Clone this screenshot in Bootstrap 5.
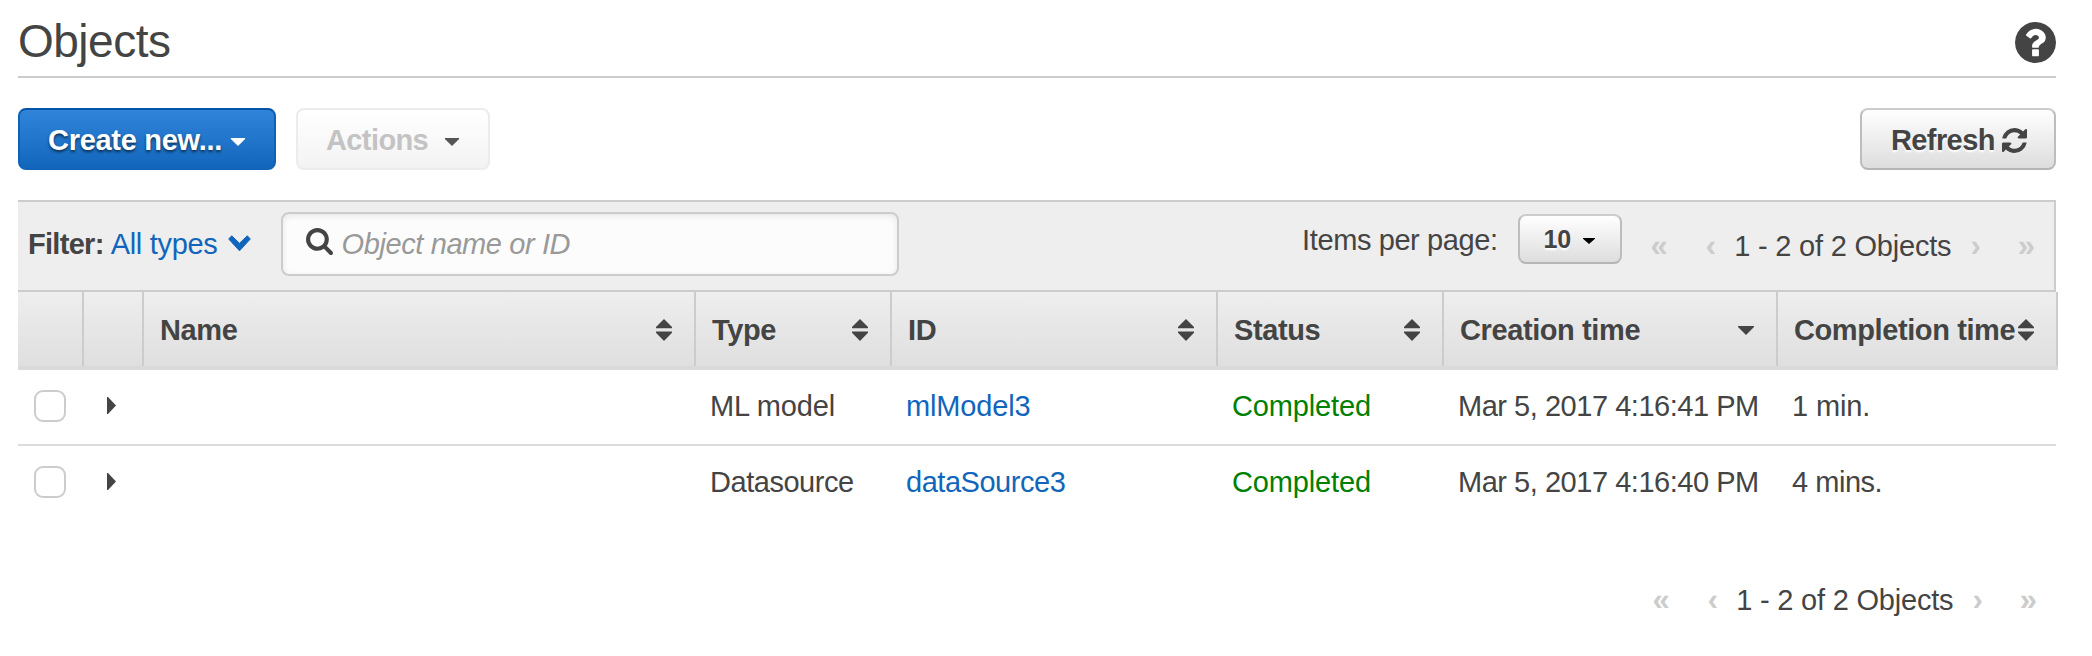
<!DOCTYPE html>
<html lang="en">
<head>
<meta charset="utf-8">
<title>Objects</title>
<link href="https://cdn.jsdelivr.net/npm/bootstrap@5.3.0/dist/css/bootstrap.min.css" rel="stylesheet">
<style>
  body { font-family: "Liberation Sans", Arial, sans-serif; font-size: 29px; line-height: 34px; color: #444; background: #fff; letter-spacing: -.15px; }
  svg { display: block; fill: currentColor; flex: none; }
  b, th { font-weight: 700; letter-spacing: -.4px; }
  b { letter-spacing: -.7px; }
  a { color: #1166bb; text-decoration: none; }
  .page { padding: 0 36px 0 18px; }
  .title-bar { height: 78px; border-bottom: 2px solid #ccc; }
  .title-bar h1 { font-size: 46px; line-height: 52px; font-weight: 400; letter-spacing: -.5px; margin: 15px 0 0; }
  .toolbar { margin-top: 30px; height: 62px; }
  .tool-btn { --bs-btn-padding-x: 0; --bs-btn-padding-y: 0; --bs-btn-border-radius: 8px; --bs-btn-border-width: 2px; display: flex; align-items: center; height: 62px; padding: 2px 0 0; font-size: 29px; font-weight: 700; line-height: 34px; letter-spacing: -.3px; color: #444; }
  .tool-create { width: 258px; padding-left: 28px; color: #fff; border-color: #0554a8 #1060b4 #1164b8; background: linear-gradient(#3186dc, #1166bb) border-box; text-shadow: 0 2px 3px rgba(0,0,0,.6); }
  .tool-actions, .tool-actions:disabled { width: 194px; padding-left: 28px; letter-spacing: -.6px; color: #c3c3c3; opacity: 1; border-color: #ececec; background: linear-gradient(#fff, #f3f3f3); }
  .tool-refresh { width: 196px; padding-left: 29px; letter-spacing: -.6px; border-color: #ccc #bdbdbd #b5b5b5; background: linear-gradient(#fff, #ddd); text-shadow: 0 2px 2px #fff; }
  .filter-bar { margin-top: 30px; height: 92px; background: #eee; border: solid #ccc; border-width: 2px 2px 2px 0; padding-left: 10px; }
  .search-box { width: 618px; height: 64px; margin: 10px 0 0 30px; padding-left: 23px; background: #fcfcfc; border: 2px solid #ccc; border-radius: 8px; box-shadow: inset 0 2px 6px rgba(0,0,0,.09); }
  .search-box input { all: unset; width: 500px; font-style: italic; letter-spacing: -.4px; margin-left: 9px; }
  .search-box input::placeholder { color: #999; opacity: 1; }
  .page-size { width: 104px; height: 50px; margin: 12px 0 0 20px; padding: 0 0 0 24px; font-size: 25px; border-color: #ccc #bdbdbd #b5b5b5; background: linear-gradient(#fff, #ddd); text-shadow: 0 2px 2px #fff; }
  .pager-step { color: #ccc; font-size: 31px; font-weight: 700; letter-spacing: 0; }
  .pager { padding-right: 19px; letter-spacing: -.2px; }
  .objects { table-layout: fixed; width: 2040px; margin-right: -2px; border-collapse: separate; border-spacing: 0; }
  .objects thead tr { background: linear-gradient(#eee, #dedede); }
  .objects th { height: 78px; padding: 0; border-bottom: 4px solid #dadada; }
  .head-cell { height: 74px; border-right: 2px solid #ccc; padding: 2px 22px 0 16px; }
  .objects td { height: 76px; padding: 0 0 2px 14px; white-space: nowrap; }
  .objects tbody tr:first-child td { border-bottom: 2px solid #ddd; }
  .objects tbody tr:first-child td:last-child { border-bottom-color: transparent; background: linear-gradient(#ddd, #ddd) left bottom / 278px 2px no-repeat border-box; }
  .objects tbody tr:last-child td { height: 74px; }
  .objects td .form-check-input { display: block; width: 32px; height: 32px; margin: 0 0 0 2px; border: 2px solid #ccc; border-radius: 9px; }
  .tight { letter-spacing: -.47px; }
  .done { color: #008000; }
</style>
</head>
<body>
<svg class="d-none">
  <symbol id="sort" viewBox="0 0 16 22"><path d="M8 0l8 8v1.200H0V8zM0 12.500h16v1.300L8 22 0 13.800z"/></symbol>
  <symbol id="tri" viewBox="0 0 16 9"><path d="M0 0h16v1L8 9 0 1z"/></symbol>
  <symbol id="expand" viewBox="0 0 9 17"><path d="M0 0h1l8 8.500L1 17H0z"/></symbol>
</svg>
<main class="page">
  <header class="title-bar d-flex justify-content-between align-items-start">
    <h1>Objects</h1>
    <svg width="41" height="41" viewBox="128 128 1536 1536" style="margin-top:22px"><path d="M1024 1376v-192q0-14-9-23t-23-9h-192q-14 0-23 9t-9 23v192q0 14 9 23t23 9h192q14 0 23-9t9-23zm256-672q0-88-55.500-163t-138.500-116-170-41q-243 0-371 213-15 24 8 42l132 100q7 6 19 6 16 0 25-12 53-68 86-92 34-24 86-24 48 0 85.500 26t37.500 59q0 38-20 61t-68 45q-63 28-115.500 86.500t-52.500 125.500v36q0 14 9 23t23 9h192q14 0 23-9t9-23q0-19 21.500-49.500t54.500-49.500q32-18 49-28.500t46-35 44.500-48 28-60.500 12.500-81zm384 192q0 209-103 385.500t-279.500 279.500-385.500 103-385.500-103-279.500-279.500-103-385.500 103-385.500 279.500-279.500 385.500-103 385.500 103 279.500 279.500 103 385.500z"/></svg>
  </header>

  <div class="toolbar d-flex">
    <button class="btn tool-btn tool-create" type="button">Create new...<svg class="ms-2" width="16" height="8" style="margin-top:4px"><use href="#tri"/></svg></button>
    <button class="btn tool-btn tool-actions" type="button" disabled style="margin-left:20px">Actions<svg width="16" height="8" style="margin:4px 0 0 16px;color:#555"><use href="#tri"/></svg></button>
    <button class="btn tool-btn tool-refresh ms-auto" type="button">Refresh<svg width="25" height="25" viewBox="128 128 1536 1536" style="margin-left:7px"><path d="M1639 1056q0 5-1 7-64 268-268 434.500t-478 166.500q-146 0-282.500-55t-243.500-157l-129 129q-19 19-45 19t-45-19-19-45v-448q0-26 19-45t45-19h448q26 0 45 19t19 45-19 45l-137 137q71 66 161 102t187 36q134 0 250-65t186-179q11-17 53-117 8-23 30-23h192q13 0 22.500 9.500t9.500 22.500zm25-800v448q0 26-19 45t-45 19h-448q-26 0-45-19t-19-45 19-45l138-138q-148-137-349-137-134 0-250 65t-186 179q-11 17-53 117-8 23-30 23h-199q-13 0-22.500-9.500t-9.500-22.500v-7q65-268 270-434.500t480-166.500q146 0 284 55.500t245 156.500l130-129q19-19 45-19t45 19 19 45z"/></svg></button>
  </div>

  <div class="filter-bar d-flex align-items-start">
    <div class="d-flex align-items-center" style="margin-top:25px">
      <b>Filter:</b>
      <a href="#" class="d-flex align-items-center" style="margin-left:7px;letter-spacing:-.3px">All types<svg width="23" height="17" viewBox="0 0 23 17" style="margin:-2px 0 0 10px"><path d="M3.700.8L11.500 8.300 19.300.8 22.300 4 11.500 15.800.700 4z" stroke="currentColor" stroke-width="1" stroke-linejoin="round"/></svg></a>
    </div>
    <div class="search-box d-flex align-items-center">
      <svg width="27" height="27" viewBox="64 128 1664 1664" style="margin-bottom:5px"><path d="M1216 832q0-185-131.500-316.500t-316.500-131.500-316.500 131.500-131.500 316.500 131.500 316.500 316.500 131.500 316.500-131.500 131.500-316.500zm512 832q0 52-38 90t-90 38q-54 0-90-38l-343-342q-179 124-399 124-143 0-273.500-55.500t-225-150-150-225-55.500-273.500 55.500-273.500 150-225 225-150 273.500-55.500 273.500 55.500 225 150 150 225 55.500 273.500q0 220-124 399l343 343q37 37 37 90z"/></svg>
      <input type="text" placeholder="Object name or ID">
    </div>
    <span class="ms-auto" style="margin-top:21px;letter-spacing:-.4px">Items per page:</span>
    <button class="btn tool-btn page-size" type="button">10<svg width="12" height="6" viewBox="0 0 16 9" preserveAspectRatio="none" style="margin:3px 0 0 12px;color:#000"><use href="#tri"/></svg></button>
    <div class="pager d-flex" style="margin:27px 0 0 29px">
      <span class="pager-step">«</span><span class="pager-step" style="margin-left:38px">‹</span>
      <span style="margin:0 19px 0 18px">1 - 2 of 2 Objects</span>
      <span class="pager-step">›</span><span class="pager-step" style="margin-left:37px">»</span>
    </div>
  </div>

  <table class="objects">
    <colgroup><col style="width:66px"><col style="width:60px"><col style="width:552px"><col style="width:196px"><col style="width:326px"><col style="width:226px"><col style="width:334px"><col style="width:280px"></colgroup>
    <thead>
      <tr>
        <th><div class="head-cell"></div></th>
        <th><div class="head-cell"></div></th>
        <th><div class="head-cell d-flex align-items-center justify-content-between">Name<svg width="16" height="22"><use href="#sort"/></svg></div></th>
        <th><div class="head-cell d-flex align-items-center justify-content-between">Type<svg width="16" height="22"><use href="#sort"/></svg></div></th>
        <th><div class="head-cell d-flex align-items-center justify-content-between">ID<svg width="16" height="22"><use href="#sort"/></svg></div></th>
        <th><div class="head-cell d-flex align-items-center justify-content-between">Status<svg width="16" height="22"><use href="#sort"/></svg></div></th>
        <th><div class="head-cell d-flex align-items-center justify-content-between">Creation time<svg width="16" height="9"><use href="#tri"/></svg></div></th>
        <th><div class="head-cell d-flex align-items-center justify-content-between text-nowrap">Completion time<svg width="16" height="22"><use href="#sort"/></svg></div></th>
      </tr>
    </thead>
    <tbody>
      <tr>
        <td><input class="form-check-input" type="checkbox"></td>
        <td><svg width="9" height="17" style="margin:-1px 0 0 9px"><use href="#expand"/></svg></td>
        <td></td><td>ML model</td><td><a href="#">mlModel3</a></td><td class="done">Completed</td><td class="tight">Mar 5, 2017 4:16:41 PM</td><td>1 min.</td>
      </tr>
      <tr>
        <td><input class="form-check-input" type="checkbox"></td>
        <td><svg width="9" height="17" style="margin:-1px 0 0 9px"><use href="#expand"/></svg></td>
        <td></td><td class="tight">Datasource</td><td class="tight"><a href="#">dataSource3</a></td><td class="done">Completed</td><td class="tight">Mar 5, 2017 4:16:40 PM</td><td class="tight">4 mins.</td>
      </tr>
    </tbody>
  </table>

  <div class="pager d-flex justify-content-end" style="margin-top:63px">
    <span class="pager-step">«</span><span class="pager-step" style="margin-left:38px">‹</span>
    <span style="margin:0 19px 0 18px">1 - 2 of 2 Objects</span>
    <span class="pager-step">›</span><span class="pager-step" style="margin-left:37px">»</span>
  </div>
</main>
<script src="https://cdn.jsdelivr.net/npm/bootstrap@5.3.0/dist/js/bootstrap.bundle.min.js"></script>
</body>
</html>
